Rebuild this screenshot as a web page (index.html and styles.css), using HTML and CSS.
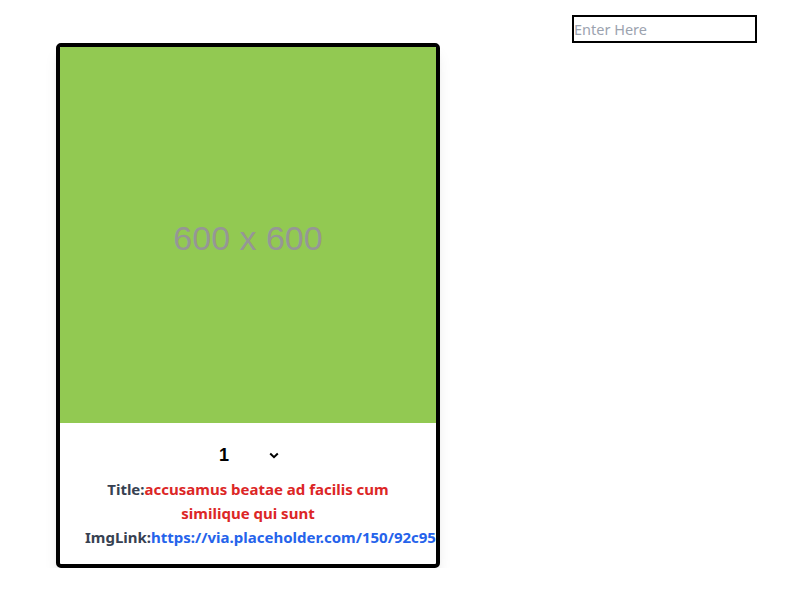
FILE: index.html
```html
<!DOCTYPE html>
<html lang="en">
<head>
<meta charset="utf-8">
<title>Photos</title>
<link rel="stylesheet" href="styles.css">
</head>
<body>
  <header class="topbar">
    <input class="search" type="text" placeholder="Enter Here">
  </header>
  <main class="list">
    <article class="card">
      <div class="thumb"><span class="thumb-label">600 x 600</span></div>
      <div class="info">
        <div class="select">
          <span class="select-value">1</span>
          <svg class="chev" width="10" height="7" viewBox="0 0 10 7" aria-hidden="true"><path d="M1.2 1.5 L5 5.2 L8.8 1.5" fill="none" stroke="#000" stroke-width="2"/></svg>
        </div>
        <p class="title"><span class="label">Title:</span><span class="title-text">accusamus beatae ad facilis cum similique qui sunt</span></p>
        <p class="link"><span class="label">ImgLink:</span><a class="link-url" href="#">https://via.placeholder.com/150/92c952</a></p>
      </div>
    </article>
  </main>
</body>
</html>
```
FILE: styles.css
```css
html, body {
  margin: 0;
  padding: 0;
  background: #fff;
}
body {
  font-family: "Noto Sans", "Open Sans", sans-serif;
}
.topbar {
  display: flex;
  justify-content: flex-end;
  padding: 15px 29px 0 0;
}
.search {
  box-sizing: border-box;
  width: 185px;
  height: 28px;
  margin: 0;
  padding: 0;
  border: 2px solid #000;
  font-family: "Noto Sans", sans-serif;
  font-size: 14.5px;
  outline: none;
}
.search::placeholder {
  color: #9ca3af;
}
.list {
  padding-left: 56px;
}
.card {
  box-sizing: border-box;
  width: 384px;
  border: 4px solid #000;
  border-radius: 5px;
  overflow: hidden;
  background: #fff;
  box-shadow: 0 10px 15px -3px rgba(0,0,0,0.1), 0 4px 6px -4px rgba(0,0,0,0.1);
}
.thumb {
  height: 376px;
  background: #92c952;
  display: flex;
  align-items: center;
  justify-content: center;
}
.thumb-label {
  font-family: "Liberation Sans", Arial, sans-serif;
  font-size: 34px;
  color: #969696;
  margin-top: 6px;
}
.info {
  padding: 16px 25px 15px;
  text-align: center;
  font-weight: 700;
  font-size: 15px;
  line-height: 24px;
}
.select {
  display: flex;
  justify-content: space-between;
  align-items: center;
  width: 60px;
  height: 32px;
  margin: 0 auto 6px;
  padding-left: 2px;
}
.select-value {
  font-family: "Liberation Sans", Arial, sans-serif;
  font-size: 18px;
  color: #000;
}
.chev {
  display: block;
}
.title, .link {
  margin: 0;
  color: #374151;
}
.title-text {
  color: #dc2626;
}
.link {
  white-space: nowrap;
}
.link-url {
  color: #2563eb;
  text-decoration: none;
}
```
